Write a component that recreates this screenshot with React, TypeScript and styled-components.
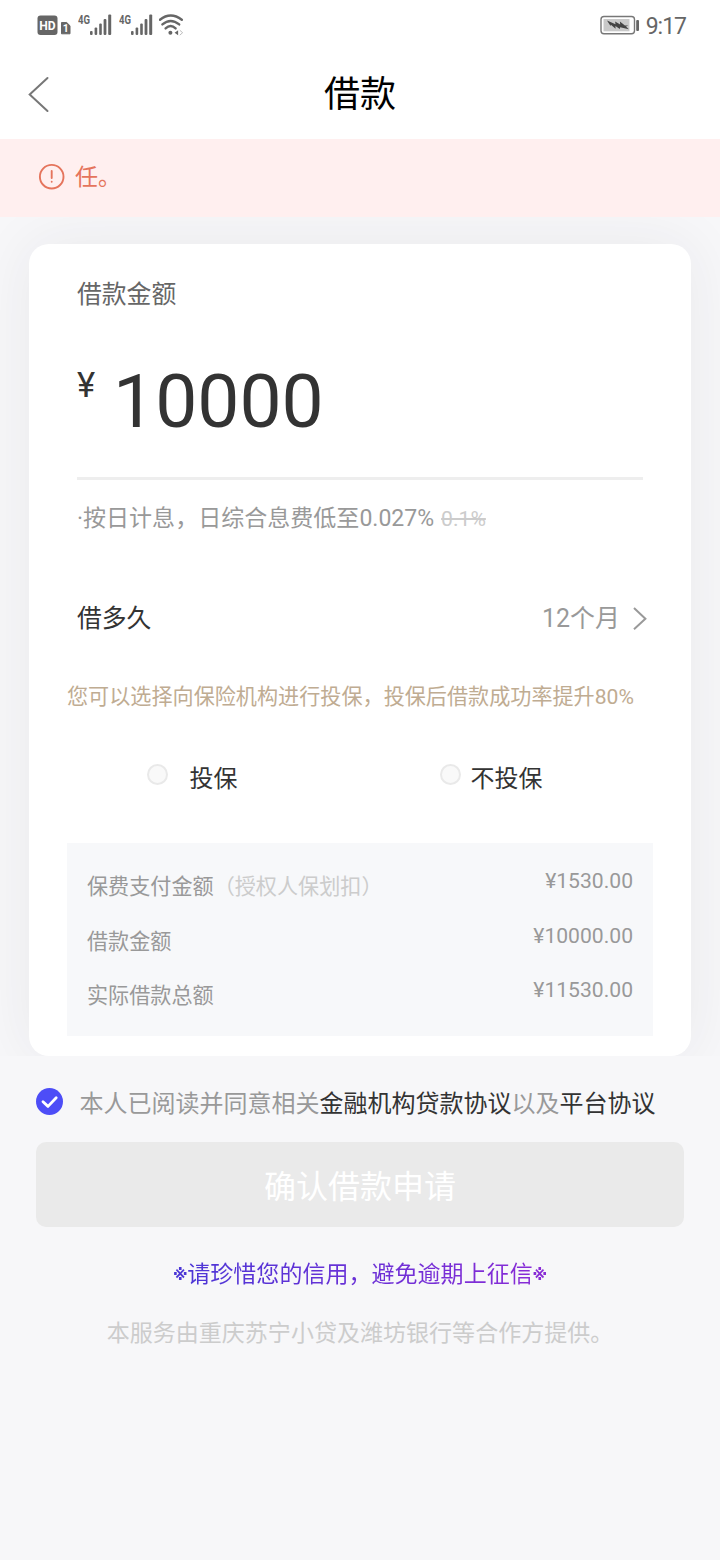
import React from 'react';
import styled, { createGlobalStyle } from 'styled-components';

const GlobalStyle = createGlobalStyle`
  * { box-sizing: border-box; }
  body {
    margin: 0;
    background: #f7f7f9;
    font-family: Roboto, "Noto Sans CJK SC", sans-serif;
    color: #333;
  }
`;

const Screen = styled.div`
  width: 720px;
  height: 1560px;
  overflow: hidden;
  background: #f7f7f9;
`;

const StatusBar = styled.div`
  display: flex;
  justify-content: space-between;
  height: 50px;
  padding: 0 34px 0 36px;
  background: #fff;
`;

const StatusGroup = styled.div`
  display: flex;
  align-items: center;
  gap: 6px;
`;

const Clock = styled.span`
  font-size: 23px;
  line-height: 50px;
  letter-spacing: -1px;
  color: #666;
  padding-top: 3px;
`;

const Header = styled.header`
  display: grid;
  grid-template-columns: 60px 1fr 60px;
  align-items: center;
  height: 89px;
  padding: 0 20px;
  background: #fff;
`;

const Title = styled.h1`
  margin: 0;
  text-align: center;
  font-size: 36px;
  line-height: 50px;
  font-weight: 400;
  color: #000;
  padding-top: 1px;
`;

const Alert = styled.div`
  display: flex;
  align-items: center;
  gap: 10px;
  height: 78px;
  padding: 0 38px 3px;
  background: #ffefef;
  color: #e5745c;
  font-size: 23.04px;
`;

const AlertText = styled.span`
  padding-bottom: 4px;
`;

const LoanSection = styled.section`
  padding: 27px 29px 0;
  overflow: hidden;
`;

const Card = styled.div`
  height: 812px;
  padding: 33px 38px 0;
  border-radius: 20px;
  background: #fff;
  box-shadow: 0 0 60px rgba(40, 40, 50, 0.07);
`;

const Inset = styled.div`
  padding: 0 10px;
`;

const Label = styled.div<{ $dark?: boolean }>`
  font-size: 24.8px;
  line-height: 36px;
  color: ${p => (p.$dark ? '#333' : '#666')};
`;

const Amount = styled.div`
  display: flex;
  align-items: flex-start;
  height: 167px;
  padding-top: 44px;
  border-bottom: 3px solid #eee;
`;

const Currency = styled.span`
  width: 36px;
  font-size: 34.56px;
  line-height: 40px;
  padding-top: 8px;
`;

const Figure = styled.span`
  font-size: 75px;
  line-height: 88px;
`;

const Rate = styled.div`
  margin-top: 22px;
  font-size: 23.04px;
  line-height: 34px;
  color: #999;
  white-space: nowrap;
`;

const OldRate = styled.del`
  margin-left: 7px;
  font-size: 21.12px;
  color: #ccc;
`;

const TermRow = styled.div`
  display: flex;
  align-items: center;
  margin-top: 65px;
  margin-right: -4px;
`;

const TermValue = styled.span`
  margin-left: auto;
  margin-right: 13px;
  font-size: 24.96px;
  line-height: 36px;
  color: #999;
`;

const Hint = styled.div`
  margin-top: 45px;
  font-size: 21.12px;
  line-height: 30px;
  color: #bfac92;
  white-space: nowrap;
`;

const Options = styled.div`
  display: flex;
  margin-top: 49px;
  padding-left: 80px;
`;

const Option = styled.label<{ $width: number; $gap: number }>`
  display: flex;
  align-items: flex-start;
  gap: ${p => p.$gap}px;
  width: ${p => p.$width}px;
  font-size: 24px;
  line-height: 36px;
`;

const Radio = styled.span`
  width: 21px;
  height: 21px;
  margin-top: 3px;
  border: 2px solid #e9e9e9;
  border-radius: 50%;
  background: #f9f9f9;
`;

const Breakdown = styled.div`
  height: 193px;
  margin-top: 46px;
  padding: 23px 20px 0;
  background: #f7f8fa;
  color: #999;
`;

const BreakdownRow = styled.div`
  display: flex;
  justify-content: space-between;
  height: 54.5px;
  font-size: 21.12px;
  line-height: 30px;
`;

const BreakdownName = styled.span`
  padding-top: 6px;
`;

const Muted = styled.span`
  color: #ccc;
`;

const Footer = styled.footer`
  padding: 28px 36px 0;
`;

const Agreement = styled.div`
  display: flex;
  align-items: center;
  gap: 16.5px;
  height: 36px;
  font-size: 24px;
  line-height: 36px;
  color: #999;
  white-space: nowrap;
`;

const AgreementText = styled.span`
  padding-top: 4px;
`;

const AgreementLink = styled.a`
  color: #333;
`;

const Submit = styled.button`
  display: block;
  width: 100%;
  height: 85px;
  margin-top: 22px;
  border: 0;
  border-radius: 10px;
  background: #eaeaea;
  color: #fff;
  font-family: inherit;
  font-size: 32px;
  line-height: 46px;
  padding: 4px 0 0;
`;

const Notice = styled.div`
  display: flex;
  justify-content: center;
  margin: 31px auto 0;
  width: 374px;
  font-size: 23.04px;
  line-height: 34px;
  white-space: nowrap;
  color: transparent;
  background: linear-gradient(90deg, #4a36d6, #8a2bd6);
  background-clip: text;
  -webkit-background-clip: text;
`;

const Mark = styled.span`
  display: flex;
  justify-content: center;
  width: 14px;
  font-family: "DejaVu Sans", sans-serif;
  font-size: 15px;
  font-weight: 700;
`;

const Provider = styled.div`
  margin-top: 25px;
  text-align: center;
  font-size: 23.04px;
  line-height: 34px;
  color: #ccc;
`;

const SignalIcon = () => (
  <svg width="34.5" height="50" viewBox="0 0 34.5 50" fill="#666">
    <text x="0" y="23.5" fontSize="12" fontWeight="700" textLength="12" lengthAdjust="spacingAndGlyphs">4G</text>
    <rect x="12" y="31" width="2.6" height="4" rx="1" />
    <rect x="16.6" y="27.5" width="2.6" height="7.5" rx="1" />
    <rect x="21.2" y="23.5" width="2.6" height="11.5" rx="1" />
    <rect x="25.6" y="19" width="2.8" height="16" rx="1" />
    <rect x="30.2" y="14.5" width="3" height="20.5" rx="1" />
  </svg>
);

const HdIcon = () => (
  <svg width="36" height="50" viewBox="0 0 36 50">
    <rect x="1.5" y="15.5" width="20" height="19.5" rx="3" fill="#666" />
    <text x="3.3" y="30" fontSize="13.5" fontWeight="700" fill="#fff" textLength="16.4" lengthAdjust="spacingAndGlyphs">HD</text>
    <path d="M25.5 22.5h5.2l3.3 3.3v8h-8.5z" fill="#666" stroke="#666" strokeLinejoin="round" />
    <text x="26.8" y="32" fontSize="10.5" fontWeight="700" fill="#fff">1</text>
  </svg>
);

const WifiIcon = () => (
  <svg width="28" height="50" viewBox="1.4 0 28 50" fill="none" stroke="#666" strokeWidth="2.4" strokeLinecap="round">
    <path d="M2.4 19.8Q13 11.4 24.2 19.8" />
    <path d="M4.8 24.4Q13 17.4 21.6 24.4" />
    <path d="M8 28.4Q13 23.8 18 28.4" />
    <circle cx="12.8" cy="32.7" r="2" fill="#666" stroke="none" />
    <path d="M17 32.7l3.5-2.5v5z" fill="#666" stroke="none" />
    <path d="M22.5 30.5l2.5 2.2-2.5 2.2" strokeWidth=".8" stroke="#aaa" />
  </svg>
);

const BatteryIcon = () => (
  <svg width="40" height="50" viewBox="0 0 40 50">
    <rect x="1" y="16.5" width="33.5" height="17.2" rx="3" fill="#fff" stroke="#777" strokeWidth="1.4" />
    <rect x="3.5" y="19" width="26" height="12.3" fill="#c9c9c9" />
    <rect x="36.2" y="20" width="2.8" height="11" rx="1" fill="#666" />
    <path d="M7 20.5l8.5 3.7-.4-2.7 5.1 3-.3-3 5 4h3.4l-2.3 1 2.8 2.8-8.6-2-.4 1.6-4.4-3 .2 2.8-4.7-4-.4 1.2z" fill="#444" />
  </svg>
);

const BackIcon = () => (
  <svg width="40" height="40" viewBox="0 0 40 40" fill="none" stroke="#777" strokeWidth="2" strokeLinecap="round">
    <path d="M27.5 3L9.7 19.5l17.8 16.5" />
  </svg>
);

const AlertIcon = () => (
  <svg width="27" height="27" viewBox="0 0 27 27" fill="none" stroke="#e5745c" strokeWidth="1.9" strokeLinecap="round">
    <circle cx="13.7" cy="13.7" r="11.8" />
    <path d="M13.7 8v7M13.7 18.7v.1" />
  </svg>
);

const ChevronIcon = () => (
  <svg width="14" height="24" viewBox="0 0 14 24" fill="none" stroke="#999" strokeWidth="2">
    <path d="M1 1L12.4 11.7 1 22.2" />
  </svg>
);

const CheckIcon = () => (
  <svg width="27" height="36" viewBox="0 0 27 36" fill="none">
    <circle cx="13.5" cy="17.5" r="13.5" fill="#4d4df7" />
    <path d="M7 17.8l5 4.6 8.2-8.6" stroke="#fff" strokeWidth="2.8" strokeLinecap="round" strokeLinejoin="round" />
  </svg>
);

const breakdown = [
  { name: '保费支付金额', note: '（授权人保划扣）', value: '¥1530.00' },
  { name: '借款金额', value: '¥10000.00' },
  { name: '实际借款总额', value: '¥11530.00' },
];

export default function App() {
  return (
    <Screen>
      <GlobalStyle />
      <StatusBar>
        <StatusGroup>
          <HdIcon />
          <SignalIcon />
          <SignalIcon />
          <WifiIcon />
        </StatusGroup>
        <StatusGroup>
          <BatteryIcon />
          <Clock>9:17</Clock>
        </StatusGroup>
      </StatusBar>
      <Header>
        <BackIcon />
        <Title>借款</Title>
      </Header>
      <Alert>
        <AlertIcon />
        <AlertText>任。</AlertText>
      </Alert>
      <LoanSection>
        <Card>
          <Inset>
            <Label>借款金额</Label>
            <Amount>
              <Currency>¥</Currency>
              <Figure>10000</Figure>
            </Amount>
            <Rate>
              ·按日计息，日综合息费低至0.027%
              <OldRate>0.1%</OldRate>
            </Rate>
            <TermRow>
              <Label $dark>借多久</Label>
              <TermValue>12个月</TermValue>
              <ChevronIcon />
            </TermRow>
          </Inset>
          <Hint>您可以选择向保险机构进行投保，投保后借款成功率提升80%</Hint>
          <Options>
            <Option $width={292.5} $gap={21.5}>
              <Radio />
              投保
            </Option>
            <Option $width={110} $gap={10}>
              <Radio />
              不投保
            </Option>
          </Options>
          <Breakdown>
            {breakdown.map(row => (
              <BreakdownRow key={row.name}>
                <BreakdownName>
                  {row.name}
                  {row.note && <Muted>{row.note}</Muted>}
                </BreakdownName>
                <span>{row.value}</span>
              </BreakdownRow>
            ))}
          </Breakdown>
        </Card>
      </LoanSection>
      <Footer>
        <Agreement>
          <CheckIcon />
          <AgreementText>
            本人已阅读并同意相关<AgreementLink>金融机构贷款协议</AgreementLink>以及
            <AgreementLink>平台协议</AgreementLink>
          </AgreementText>
        </Agreement>
        <Submit>确认借款申请</Submit>
        <Notice>
          <Mark>※</Mark>请珍惜您的信用，避免逾期上征信<Mark>※</Mark>
        </Notice>
        <Provider>本服务由重庆苏宁小贷及潍坊银行等合作方提供。</Provider>
      </Footer>
    </Screen>
  );
}
